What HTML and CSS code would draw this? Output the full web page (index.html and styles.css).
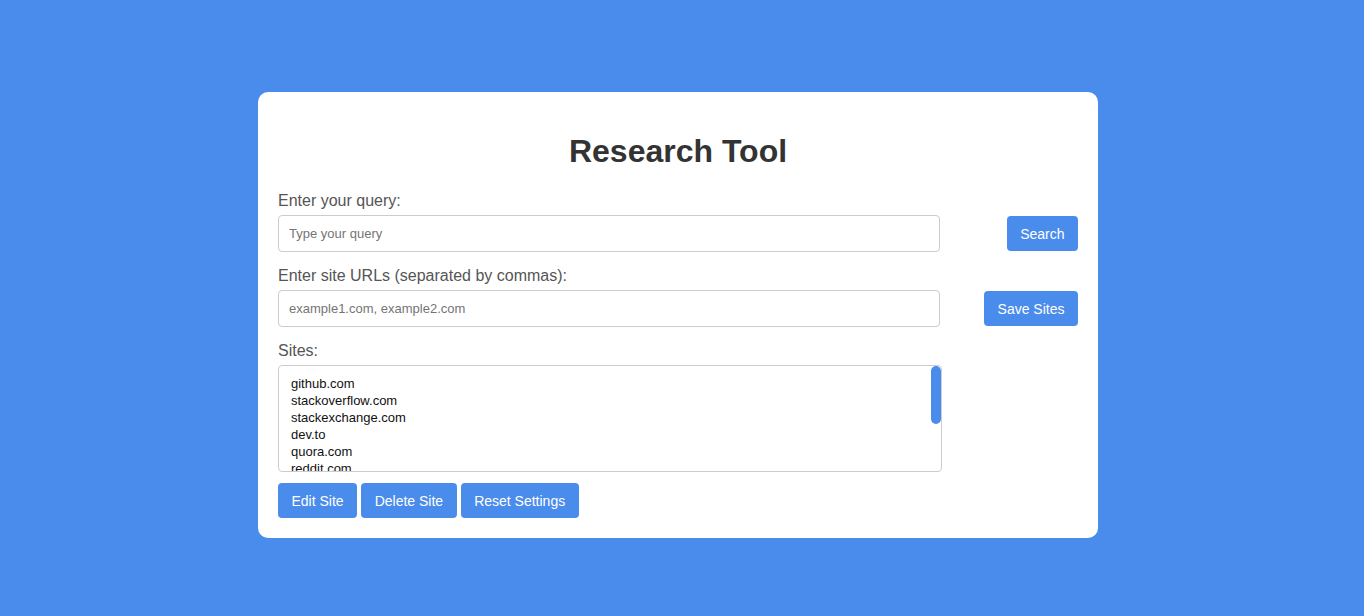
FILE: index.html
```html
<!DOCTYPE html>
<html lang="en">
<head>
<meta charset="utf-8">
<title>Research Tool</title>
<link rel="stylesheet" href="styles.css">
</head>
<body>
<div class="page">
  <div class="card">
    <h1 class="title">Research Tool</h1>
    <label class="label" for="q">Enter your query:</label>
    <div class="row">
      <input class="field" id="q" type="text" placeholder="Type your query">
      <button class="btn">Search</button>
    </div>
    <label class="label" for="s">Enter site URLs (separated by commas):</label>
    <div class="row">
      <input class="field" id="s" type="text" placeholder="example1.com, example2.com">
      <button class="btn">Save Sites</button>
    </div>
    <div class="label">Sites:</div>
    <div class="sites-wrap">
      <div class="sites">
        <div class="site">github.com</div>
        <div class="site">stackoverflow.com</div>
        <div class="site">stackexchange.com</div>
        <div class="site">dev.to</div>
        <div class="site">quora.com</div>
        <div class="site">reddit.com</div>
        <div class="site">medium.com</div>
        <div class="site">hashnode.com</div>
        <div class="site">freecodecamp.org</div>
        <div class="site">geeksforgeeks.org</div>
      </div>
      <div class="thumb"></div>
    </div>
    <div class="actions">
      <button class="btn">Edit Site</button>
      <button class="btn">Delete Site</button>
      <button class="btn">Reset Settings</button>
    </div>
  </div>
</div>
</body>
</html>
```

FILE: styles.css
```css
html, body {
  margin: 0;
  padding: 0;
}
body {
  background: #4a8cec;
  font-family: "Liberation Sans", Arial, sans-serif;
  height: 616px;
  overflow: hidden;
}
.page {
  padding: 92px 0 0 258px;
}
.card {
  width: 800px;
  padding: 20px;
  background: #ffffff;
  border-radius: 10px;
}
.title {
  margin: 21px 0 21px;
  font-size: 32px;
  line-height: 37px;
  font-weight: bold;
  color: #333333;
  text-align: center;
}
.label {
  display: block;
  font-size: 16px;
  line-height: 18px;
  padding-top: 1px;
  color: #555555;
  margin-bottom: 5px;
}
.row {
  display: flex;
  align-items: center;
  justify-content: space-between;
  margin-bottom: 14px;
}
.field {
  box-sizing: border-box;
  width: 662px;
  height: 37px;
  margin: 0;
  padding: 0 10px;
  border: 1px solid #cccccc;
  border-radius: 4px;
  font-family: "Liberation Sans", Arial, sans-serif;
  font-size: 13px;
  color: #333333;
  outline: none;
}
.field::placeholder {
  color: #757575;
}
.btn {
  box-sizing: border-box;
  height: 35px;
  margin: 0;
  padding: 0 13.5px;
  border: none;
  border-radius: 4px;
  background: #4a8cec;
  color: #ffffff;
  font-family: "Liberation Sans", Arial, sans-serif;
  font-size: 14px;
  cursor: pointer;
}
.sites-wrap {
  position: relative;
  width: 664px;
}
.sites {
  box-sizing: border-box;
  width: 664px;
  height: 107px;
  padding: 9px 12px;
  border: 1px solid #cccccc;
  border-radius: 4px;
  overflow-y: scroll;
  scrollbar-width: none;
  font-size: 13px;
  line-height: 17px;
  color: #111111;
}
.sites::-webkit-scrollbar {
  display: none;
}
.thumb {
  position: absolute;
  top: 1px;
  left: 653px;
  width: 10px;
  height: 58px;
  border-radius: 5px;
  background: #4a8cec;
}
.actions {
  display: flex;
  gap: 4px;
  margin-top: 11px;
}
```
